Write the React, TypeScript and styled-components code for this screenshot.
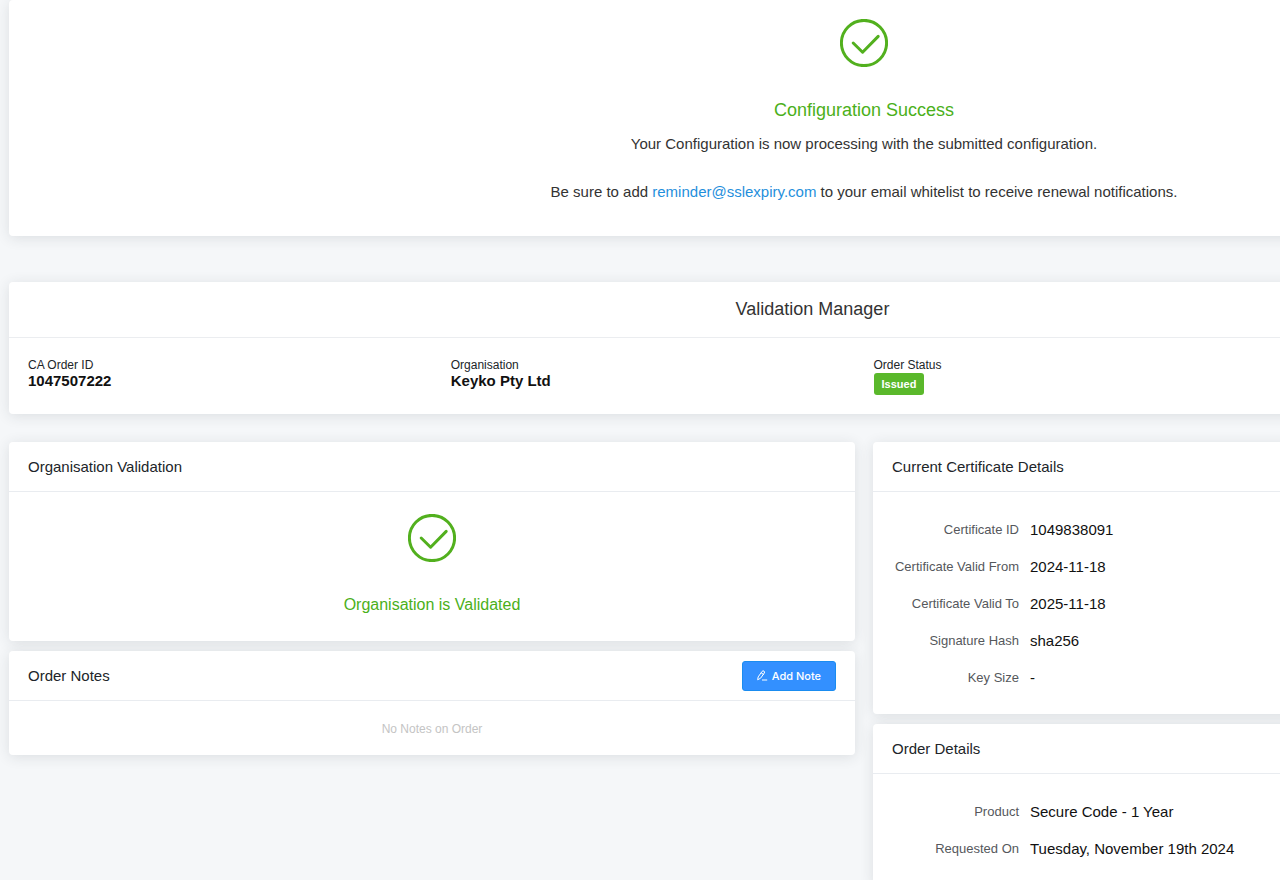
import React from "react";
import styled, { createGlobalStyle } from "styled-components";

const GlobalStyle = createGlobalStyle`
  * { box-sizing: border-box; }
  body {
    margin: 0;
    background: #f5f7f9;
    color: #212529;
    font-family: "Liberation Sans", Arial, sans-serif;
    font-size: 15px;
    line-height: 24px;
  }
  h1, h2, h3, p, dl, dt, dd { margin: 0; font-weight: 400; }
`;

const Viewport = styled.div`
  min-height: 100vh;
  overflow-x: hidden;
`;

const Page = styled.main`
  width: 135%;
  padding: 0 9px;
`;

const Card = styled.section`
  background: #fff;
  border-radius: 4px;
  box-shadow: 0 2px 14px rgba(40, 48, 56, 0.12);
`;

const SuccessCard = styled(Card)`
  display: flex;
  flex-direction: column;
  align-items: center;
  padding: 19px 19px 32px;
  margin-bottom: 46px;
  color: #333;
  text-align: center;
`;

const Headline = styled.h1`
  margin: 31px 0 10px;
  color: #4bb01a;
  font-size: 18px;
  line-height: 24px;
`;

const Paragraph = styled.p`
  margin-bottom: 24px;
  &:last-child { margin-bottom: 0; }
`;

const MailLink = styled.a`
  color: #1f8fdc;
  text-decoration: none;
`;

const ManagerCard = styled(Card)`
  margin-bottom: 28px;
`;

const ManagerHeader = styled.header`
  padding: 15px 122px 16px 19px;
  border-bottom: 1px solid #ebedf0;
  text-align: center;
`;

const ManagerTitle = styled.h2`
  color: #333;
  font-size: 18px;
  line-height: 24px;
`;

const SummaryList = styled.dl`
  display: grid;
  grid-template-columns: repeat(4, 1fr);
  padding: 19px 0 19px 19px;
`;

const SummaryItem = styled.div`
  line-height: 16px;
`;

const SummaryLabel = styled.dt`
  font-size: 12px;
`;

const SummaryValue = styled.dd`
  color: #111;
  font-size: 15px;
  font-weight: 700;
`;

const Badge = styled.span`
  display: block;
  width: fit-content;
  padding: 3px 8px;
  border-radius: 3px;
  background: #5ab82b;
  color: #fff;
  font-size: 11px;
  line-height: 16px;
`;

const Columns = styled.div`
  display: grid;
  grid-template-columns: 1fr 1fr;
  align-items: start;
  gap: 18px;
`;

const Column = styled.div`
  display: flex;
  flex-direction: column;
  gap: 10px;
`;

const CardHeader = styled.header`
  display: flex;
  align-items: center;
  justify-content: space-between;
  height: 50px;
  padding: 0 19px;
  border-bottom: 1px solid #e9ecf0;
`;

const CardTitle = styled.h3`
  font-size: 15px;
`;

const ValidationBody = styled.div`
  display: flex;
  flex-direction: column;
  align-items: center;
  gap: 31px;
  padding: 22px 19px 24px;
`;

const ValidationText = styled.p`
  color: #4bb01a;
  font-size: 16px;
`;

const AddButton = styled.button`
  display: flex;
  align-items: center;
  gap: 4px;
  height: 30px;
  padding: 0 14px;
  border: 1px solid #1a8cf0;
  border-radius: 3px;
  background: #3390ff;
  color: #fff;
  font-family: Inter, "Liberation Sans", sans-serif;
  font-size: 11px;
  font-weight: 500;
  cursor: pointer;
`;

const EmptyNote = styled.p`
  padding: 16px 19px 14px;
  color: #c4c4c4;
  font-size: 12px;
  text-align: center;
`;

const DetailList = styled.dl`
  padding: 19px 0 18px;
`;

const DetailRow = styled.div`
  display: grid;
  grid-template-columns: 146px 1fr;
  column-gap: 11px;
  align-items: center;
  line-height: 37px;
`;

const DetailLabel = styled.dt`
  color: #55585c;
  font-size: 13px;
  text-align: right;
`;

const DetailValue = styled.dd`
  color: #111;
`;

function SuccessIcon() {
  return (
    <svg width="48" height="48" viewBox="0 0 48 48" fill="none" stroke="#52b01e" strokeWidth="3" strokeLinecap="round" strokeLinejoin="round" aria-hidden="true">
      <circle cx="24" cy="24" r="22.6" />
      <path d="M13.2 24 L22.6 33.2 L38.2 17.4" />
    </svg>
  );
}

function PenIcon() {
  return (
    <svg width="11" height="11" viewBox="0 0 11 11" fill="none" stroke="#fff" strokeWidth="1" strokeLinecap="round" strokeLinejoin="round" aria-hidden="true">
      <path d="M1.4 6.6 L5.1 1.4 Q5.9 0.4 7 1.1 Q8 1.9 7.3 3 L3.6 8.2 L1 9.6 Z M4.2 2.8 L6.4 4.4 M5.4 10 H9.8" />
    </svg>
  );
}

const certificate = [
  ["Certificate ID", "1049838091"],
  ["Certificate Valid From", "2024-11-18"],
  ["Certificate Valid To", "2025-11-18"],
  ["Signature Hash", "sha256"],
  ["Key Size", "-"],
];

const order = [
  ["Product", "Secure Code - 1 Year"],
  ["Requested On", "Tuesday, November 19th 2024"],
];

function DetailCard({ title, rows }: { title: string; rows: string[][] }) {
  return (
    <Card>
      <CardHeader><CardTitle>{title}</CardTitle></CardHeader>
      <DetailList>
        {rows.map(([label, value]) => (
          <DetailRow key={label}>
            <DetailLabel>{label}</DetailLabel>
            <DetailValue>{value}</DetailValue>
          </DetailRow>
        ))}
      </DetailList>
    </Card>
  );
}

export default function App() {
  return (
    <Viewport>
      <GlobalStyle />
      <Page>
        <SuccessCard>
          <SuccessIcon />
          <Headline>Configuration Success</Headline>
          <Paragraph>Your Configuration is now processing with the submitted configuration.</Paragraph>
          <Paragraph>
            Be sure to add <MailLink href="mailto:reminder@sslexpiry.com">reminder@sslexpiry.com</MailLink> to your email whitelist to receive renewal notifications.
          </Paragraph>
        </SuccessCard>

        <ManagerCard>
          <ManagerHeader><ManagerTitle>Validation Manager</ManagerTitle></ManagerHeader>
          <SummaryList>
            <SummaryItem>
              <SummaryLabel>CA Order ID</SummaryLabel>
              <SummaryValue>1047507222</SummaryValue>
            </SummaryItem>
            <SummaryItem>
              <SummaryLabel>Organisation</SummaryLabel>
              <SummaryValue>Keyko Pty Ltd</SummaryValue>
            </SummaryItem>
            <SummaryItem>
              <SummaryLabel>Order Status</SummaryLabel>
              <SummaryValue><Badge>Issued</Badge></SummaryValue>
            </SummaryItem>
          </SummaryList>
        </ManagerCard>

        <Columns>
          <Column>
            <Card>
              <CardHeader><CardTitle>Organisation Validation</CardTitle></CardHeader>
              <ValidationBody>
                <SuccessIcon />
                <ValidationText>Organisation is Validated</ValidationText>
              </ValidationBody>
            </Card>
            <Card>
              <CardHeader>
                <CardTitle>Order Notes</CardTitle>
                <AddButton type="button"><PenIcon />Add Note</AddButton>
              </CardHeader>
              <EmptyNote>No Notes on Order</EmptyNote>
            </Card>
          </Column>
          <Column>
            <DetailCard title="Current Certificate Details" rows={certificate} />
            <DetailCard title="Order Details" rows={order} />
          </Column>
        </Columns>
      </Page>
    </Viewport>
  );
}
